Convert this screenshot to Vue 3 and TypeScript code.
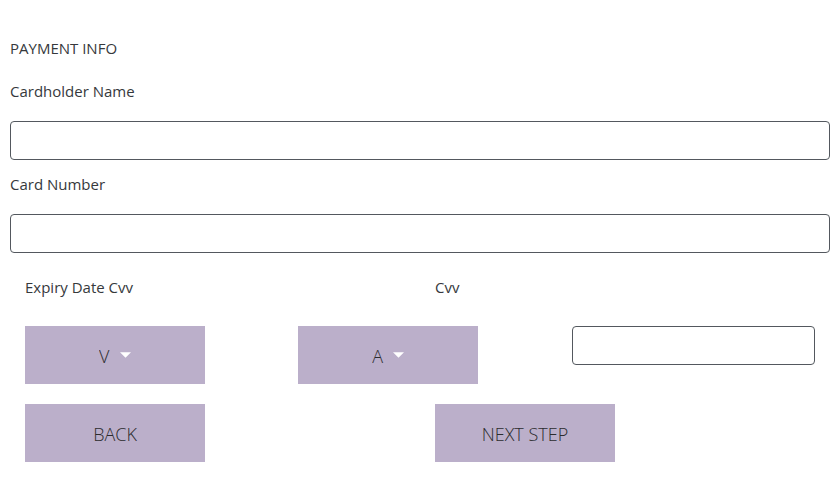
<script setup lang="ts">
import { ref } from 'vue'

const holder = ref('')
const cardNumber = ref('')
const cvv = ref('')
const month = ref('V')
const year = ref('A')
</script>

<template>
  <form class="payment" @submit.prevent>
    <h1 class="title">PAYMENT INFO</h1>

    <label class="label" for="holder">Cardholder Name</label>
    <input id="holder" v-model="holder" class="field" type="text" />

    <label class="label number" for="number">Card Number</label>
    <input id="number" v-model="cardNumber" class="field" type="text" />

    <div class="row halves captions">
      <div class="col"><label class="label" for="month">Expiry Date Cvv</label></div>
      <div class="col"><label class="label" for="cvv">Cvv</label></div>
    </div>

    <div class="row thirds">
      <div class="col">
        <div class="dropdown">
          <select id="month" v-model="month" class="button select">
            <option>V</option>
          </select>
          <svg class="caret" viewBox="0 0 10 5" aria-hidden="true"><path d="M0 0h10L5 5z" /></svg>
        </div>
      </div>
      <div class="col">
        <div class="dropdown">
          <select id="year" v-model="year" class="button select" aria-label="Expiry year">
            <option>A</option>
          </select>
          <svg class="caret" viewBox="0 0 10 5" aria-hidden="true"><path d="M0 0h10L5 5z" /></svg>
        </div>
      </div>
      <div class="col">
        <input id="cvv" v-model="cvv" class="field" type="text" />
      </div>
    </div>

    <div class="row halves actions">
      <div class="col"><button class="button" type="button">BACK</button></div>
      <div class="col"><button class="button" type="submit">NEXT STEP</button></div>
    </div>
  </form>
</template>

<style>
body {
  background: #fff;
}
</style>

<style scoped>
.payment {
  padding: 36px 10px 26px;
  color: #36393c;
  font-family: "Segoe UI", "Open Sans", "Noto Sans", sans-serif;
  font-size: 15px;
  font-weight: 400;
  line-height: 24px;
}

.title {
  margin: 0 0 19px;
  font-size: 15px;
  font-weight: 400;
  line-height: 24px;
}

.label {
  display: block;
}

.number {
  margin-top: 12px;
}

.field {
  display: block;
  box-sizing: border-box;
  width: 100%;
  height: 39px;
  padding: 6px 12px;
  border: 1px solid #53585e;
  border-radius: 4px;
  background: #fff;
  color: inherit;
  font: inherit;
}

.label + .field {
  margin-top: 18px;
}

.row {
  display: grid;
}

.halves {
  grid-template-columns: repeat(2, 1fr);
}

.thirds {
  grid-template-columns: repeat(3, 1fr);
}

.col {
  min-width: 0;
  padding: 0 15px;
}

.captions {
  margin: 22px 0 27px;
}

.actions {
  margin-top: 20px;
}

.dropdown {
  position: relative;
  width: 180px;
}

.button {
  display: block;
  box-sizing: border-box;
  width: 180px;
  height: 58px;
  padding: 2px 0 0;
  border: 0;
  border-radius: 0;
  background: #bbafca;
  color: #2c2c2e;
  font-family: inherit;
  font-size: 18px;
  font-weight: 300;
  line-height: 27px;
  cursor: pointer;
}

.select {
  padding-left: 74px;
  appearance: none;
}

.caret {
  position: absolute;
  top: 26px;
  left: 95px;
  width: 11px;
  height: 6px;
  fill: #fff;
  pointer-events: none;
}
</style>
